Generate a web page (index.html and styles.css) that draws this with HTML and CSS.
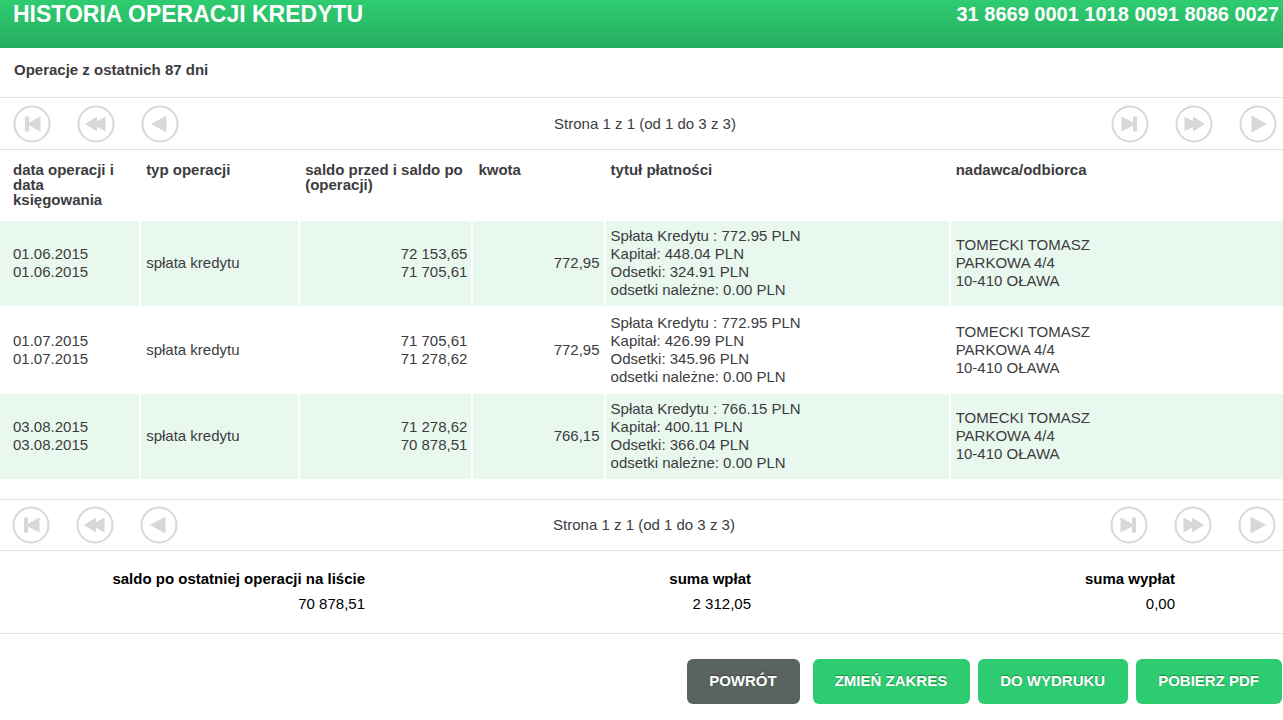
FILE: index.html
```
<!DOCTYPE html>
<html lang="pl">
<head>
<meta charset="utf-8">
<title>Historia operacji kredytu</title>
<link rel="stylesheet" href="styles.css">
</head>
<body>
<svg class="sprite" aria-hidden="true">
  <symbol id="first" viewBox="0 0 38 38"><circle cx="19" cy="19" r="17.500"/><path d="M12 11.500h4v6L27.500 11.500v15L16 20.500v6H12z"/></symbol>
  <symbol id="rewind" viewBox="0 0 38 38"><circle cx="19" cy="19" r="17.500"/><path d="M8 19L20 11.500v15zM15 19L28.500 11.500v15z"/></symbol>
  <symbol id="prev" viewBox="0 0 38 38"><circle cx="19" cy="19" r="17.500"/><path d="M10 19L25.500 10.500v17z"/></symbol>
</svg>
<header class="bar">
  <h1 class="title">HISTORIA OPERACJI KREDYTU</h1>
  <p class="account">31 8669 0001 1018 0091 8086 0027</p>
</header>
<main>
  <h2 class="range">Operacje z ostatnich 87 dni</h2>

  <nav class="pager" aria-label="Stronicowanie">
    <div class="pager-group">
      <button class="round" disabled aria-label="Pierwsza strona"><svg><use href="#first"/></svg></button>
      <button class="round" disabled aria-label="Przewiń wstecz"><svg><use href="#rewind"/></svg></button>
      <button class="round" disabled aria-label="Poprzednia strona"><svg><use href="#prev"/></svg></button>
    </div>
    <span>Strona 1 z 1 (od 1 do 3 z 3)</span>
    <div class="pager-group pager-forward">
      <button class="round forward" disabled aria-label="Ostatnia strona"><svg><use href="#first"/></svg></button>
      <button class="round forward" disabled aria-label="Przewiń dalej"><svg><use href="#rewind"/></svg></button>
      <button class="round forward" disabled aria-label="Następna strona"><svg><use href="#prev"/></svg></button>
    </div>
  </nav>

  <table class="operations">
    <colgroup><col class="c-date"><col class="c-type"><col class="c-balance"><col class="c-amount"><col class="c-title"><col></colgroup>
    <thead>
      <tr><th scope="col">data operacji i data księgowania</th><th scope="col">typ operacji</th><th scope="col">saldo przed i saldo po (operacji)</th><th scope="col">kwota</th><th scope="col">tytuł płatności</th><th scope="col">nadawca/odbiorca</th></tr>
    </thead>
    <tbody>
      <tr>
        <td>01.06.2015<br>01.06.2015</td><td>spłata kredytu</td><td class="num">72 153,65<br>71 705,61</td><td class="num">772,95</td>
        <td>Spłata Kredytu : 772.95 PLN<br>Kapitał: 448.04 PLN<br>Odsetki: 324.91 PLN<br>odsetki należne: 0.00 PLN</td>
        <td>TOMECKI TOMASZ<br>PARKOWA 4/4<br>10-410 OŁAWA</td>
      </tr>
      <tr>
        <td>01.07.2015<br>01.07.2015</td><td>spłata kredytu</td><td class="num">71 705,61<br>71 278,62</td><td class="num">772,95</td>
        <td>Spłata Kredytu : 772.95 PLN<br>Kapitał: 426.99 PLN<br>Odsetki: 345.96 PLN<br>odsetki należne: 0.00 PLN</td>
        <td>TOMECKI TOMASZ<br>PARKOWA 4/4<br>10-410 OŁAWA</td>
      </tr>
      <tr>
        <td>03.08.2015<br>03.08.2015</td><td>spłata kredytu</td><td class="num">71 278,62<br>70 878,51</td><td class="num">766,15</td>
        <td>Spłata Kredytu : 766.15 PLN<br>Kapitał: 400.11 PLN<br>Odsetki: 366.04 PLN<br>odsetki należne: 0.00 PLN</td>
        <td>TOMECKI TOMASZ<br>PARKOWA 4/4<br>10-410 OŁAWA</td>
      </tr>
    </tbody>
  </table>

  <nav class="pager pager-bottom" aria-label="Stronicowanie na dole">
    <div class="pager-group">
      <button class="round" disabled aria-label="Pierwsza strona"><svg><use href="#first"/></svg></button>
      <button class="round" disabled aria-label="Przewiń wstecz"><svg><use href="#rewind"/></svg></button>
      <button class="round" disabled aria-label="Poprzednia strona"><svg><use href="#prev"/></svg></button>
    </div>
    <span>Strona 1 z 1 (od 1 do 3 z 3)</span>
    <div class="pager-group pager-forward">
      <button class="round forward" disabled aria-label="Ostatnia strona"><svg><use href="#first"/></svg></button>
      <button class="round forward" disabled aria-label="Przewiń dalej"><svg><use href="#rewind"/></svg></button>
      <button class="round forward" disabled aria-label="Następna strona"><svg><use href="#prev"/></svg></button>
    </div>
  </nav>

  <dl class="summary">
    <div><dt>saldo po ostatniej operacji na liście</dt><dd>70 878,51</dd></div>
    <div><dt>suma wpłat</dt><dd>2 312,05</dd></div>
    <div><dt>suma wypłat</dt><dd>0,00</dd></div>
  </dl>

  <div class="actions">
    <button class="action back">POWRÓT</button>
    <button class="action">ZMIEŃ ZAKRES</button>
    <button class="action">DO WYDRUKU</button>
    <button class="action">POBIERZ PDF</button>
  </div>
</main>
</body>
</html>
```

FILE: styles.css
```
* { box-sizing: border-box; }

body {
  margin: 0;
  background: #fff;
  color: #3c3c40;
  font: 15px/18px "Liberation Sans", Arial, sans-serif;
}

.sprite { display: none; }

.bar {
  display: flex;
  justify-content: space-between;
  padding: 0 4px 20px 13px;
  background: linear-gradient(#2ecc71, #27ae60);
  color: #fff;
  line-height: 28px;
}
.title { margin: 0; font-size: 23px; font-weight: bold; }
.account { margin: 0; font-size: 20px; font-weight: bold; }

.range {
  margin: 0;
  padding: 13px 14px 18px;
  font-size: 15px;
  font-weight: bold;
}

.pager {
  display: grid;
  grid-template-columns: 1fr auto 1fr;
  align-items: center;
  padding: 7px 6px 6px 13px;
  border-top: 1px solid #e0e0e0;
  border-bottom: 1px solid #e0e0e0;
}
.pager-bottom {
  margin-top: 20px;
  padding: 6px 7px 6px 12px;
}
.pager-group { display: flex; gap: 26px; }
.pager-forward { justify-content: flex-end; }
.round {
  width: 38px;
  height: 38px;
  padding: 0;
  border: 0;
  background: none;
}
.round svg { display: block; width: 38px; height: 38px; fill: #d8d8d8; }
.forward svg { transform: scaleX(-1); }
symbol circle { fill: none; stroke: #d8d8d8; stroke-width: 2; }

.operations { width: 100%; table-layout: fixed; border-collapse: separate; border-spacing: 0; }
.c-date { width: 11%; }
.c-type { width: 12.4%; }
.c-balance { width: 13.5%; }
.c-amount { width: 10.3%; }
.c-title { width: 26.9%; }

th {
  padding: 12px 8px 14px 5px;
  line-height: 15px;
  text-align: left;
  vertical-align: top;
}
td { padding: 6px 5px 7px; border-right: 2px solid #fff; }
td:last-child { border-right: 0; }
th:first-child, td:first-child { padding-left: 13px; }
tbody tr:nth-child(odd) { background: #e9f8ef; }
tbody tr:nth-child(even) td { padding-top: 8px; padding-bottom: 8px; }
.num { padding-right: 4px; text-align: right; }

.summary {
  display: grid;
  grid-template-columns: 365fr 386fr 424fr 108fr;
  margin: 0;
  padding: 15px 0 17px;
  border-bottom: 1px solid #e0e0e0;
  color: #000;
  line-height: 25px;
  text-align: right;
}
.summary dt { font-weight: bold; }
.summary dd { margin: 0; }

.actions {
  display: flex;
  justify-content: flex-end;
  gap: 8px;
  padding: 25px 1px 16px;
}
.action {
  height: 45px;
  padding: 0 23px 2px 22px;
  border: 0;
  border-radius: 6px;
  background: #2ecc71;
  color: #fff;
  font: bold 15px/18px "Liberation Sans", Arial, sans-serif;
  text-shadow: 0 -1px 1px rgba(0, 0, 0, 0.35);
}
.back { margin-right: 5px; background: #596360; }
```
